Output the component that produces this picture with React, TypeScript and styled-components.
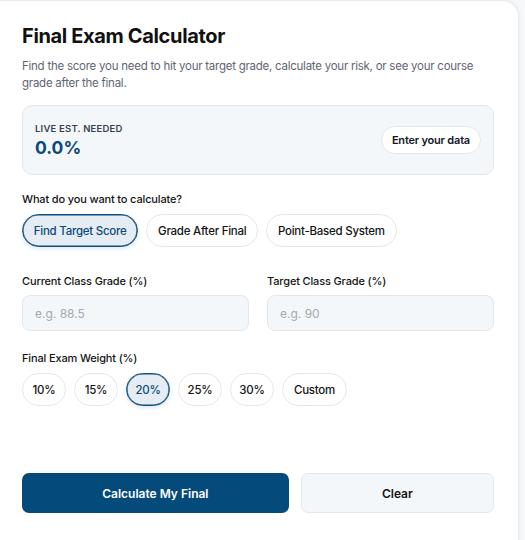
import React, { useState } from 'react';
import styled, { createGlobalStyle, css } from 'styled-components';

const GlobalStyle = createGlobalStyle`
  * { box-sizing: border-box; }
  body {
    margin: 0;
    background: #f6f8fa;
    font-family: Inter, "Noto Sans", sans-serif;
    color: #111827;
  }
`;

const Card = styled.div`
  width: 519px;
  min-height: 560px;
  background: #fff;
  border: 1px solid #e6e9ee;
  border-left: none;
  border-radius: 0 16px 0 0;
  padding: 23px 24px 0 22px;
  box-shadow: 1px 0 3px rgba(15, 23, 42, 0.04);
`;

const Title = styled.h1`
  margin: 0;
  font-size: 20px;
  line-height: 24px;
  font-weight: 700;
  letter-spacing: -0.35px;
  color: #111111;
`;

const Lead = styled.p`
  margin: 10px 0 0;
  font-size: 11.5px;
  line-height: 17px;
  letter-spacing: -0.25px;
  color: #5f6673;
`;

const LiveBox = styled.div`
  margin-top: 13px;
  height: 70px;
  background: #f4f7fa;
  border: 1px solid #e2e7ee;
  border-radius: 10px;
  padding: 0 12px 0 12px;
  display: flex;
  align-items: center;
  justify-content: space-between;
`;

const LiveText = styled.div`
  display: flex;
  flex-direction: column;
  gap: 3px;
`;

const Eyebrow = styled.span`
  font-size: 9.5px;
  font-weight: 600;
  letter-spacing: 0.2px;
  color: #3a4150;
`;

const BigNumber = styled.span`
  font-size: 17.5px;
  font-weight: 700;
  color: #0b4a78;
`;

const GhostPill = styled.button`
  height: 28px;
  padding: 0 10px;
  border-radius: 999px;
  border: 1px solid #e3e7ec;
  background: #fff;
  font: 600 11px Inter, sans-serif;
  letter-spacing: -0.2px;
  color: #111827;
`;

const SectionLabel = styled.div<{ $top: number }>`
  margin-top: ${(p) => p.$top}px;
  font-size: 11px;
  font-weight: 500;
  letter-spacing: -0.15px;
  color: #141414;
`;

const PillRow = styled.div`
  margin-top: 8px;
  display: flex;
  gap: 8px;
`;

const Pill = styled.button<{ $active?: boolean }>`
  height: 33px;
  padding: 0 10.75px;
  border-radius: 999px;
  border: 1px solid #e3e7ec;
  background: #fff;
  font: 500 11.5px Inter, sans-serif;
  letter-spacing: -0.25px;
  color: #141414;
  ${(p) =>
    p.$active &&
    css`
      background: #e5ecf3;
      border-color: #114e7c;
      color: #0b4a78;
      box-shadow: inset 0 0 0 0.6px #114e7c, 0 2px 4px rgba(11, 74, 120, 0.12);
    `}
`;

const WeightPill = styled(Pill)<{ $wide?: boolean }>`
  min-width: 44px;
  padding: 0 ${(p) => (p.$wide ? 11 : 8)}px;
`;

const FieldGrid = styled.div`
  margin-top: 27px;
  display: grid;
  grid-template-columns: 1fr 1fr;
  gap: 18px;
`;

const Field = styled.label`
  display: flex;
  flex-direction: column;
  gap: 7px;
  font-size: 11px;
  font-weight: 500;
  letter-spacing: -0.15px;
  color: #141414;
`;

const Input = styled.input`
  height: 36px;
  width: 100%;
  border-radius: 8px;
  border: 1px solid #e2e7ee;
  background: #f4f7fa;
  padding: 0 12px;
  font: 400 12px Inter, sans-serif;
  color: #111;
  &::placeholder {
    color: #a3a9b3;
  }
`;

const Actions = styled.div`
  margin-top: 67px;
  display: grid;
  grid-template-columns: 1.38fr 1fr;
  gap: 12px;
`;

const Primary = styled.button`
  height: 40px;
  border-radius: 7px;
  border: none;
  background: #044a7a;
  color: #fff;
  font: 600 12px Inter, sans-serif;
`;

const Secondary = styled.button`
  height: 40px;
  border-radius: 7px;
  border: 1px solid #e2e7ee;
  background: #f4f7fa;
  color: #141414;
  font: 600 12px Inter, sans-serif;
`;

const modes = ['Find Target Score', 'Grade After Final', 'Point-Based System'];
const weights = ['10%', '15%', '20%', '25%', '30%', 'Custom'];

export default function App() {
  const [mode, setMode] = useState(modes[0]);
  const [weight, setWeight] = useState('20%');

  return (
    <>
      <GlobalStyle />
      <Card>
        <Title>Final Exam Calculator</Title>
        <Lead>
          Find the score you need to hit your target grade, calculate your risk, or see your course
          grade after the final.
        </Lead>

        <LiveBox>
          <LiveText>
            <Eyebrow>LIVE EST. NEEDED</Eyebrow>
            <BigNumber>0.0%</BigNumber>
          </LiveText>
          <GhostPill>Enter your data</GhostPill>
        </LiveBox>

        <SectionLabel $top={17}>What do you want to calculate?</SectionLabel>
        <PillRow>
          {modes.map((m) => (
            <Pill key={m} $active={m === mode} onClick={() => setMode(m)}>
              {m}
            </Pill>
          ))}
        </PillRow>

        <FieldGrid>
          <Field>
            Current Class Grade (%)
            <Input placeholder="e.g. 88.5" />
          </Field>
          <Field>
            Target Class Grade (%)
            <Input placeholder="e.g. 90" />
          </Field>
        </FieldGrid>

        <SectionLabel $top={20}>Final Exam Weight (%)</SectionLabel>
        <PillRow>
          {weights.map((w) => (
            <WeightPill
              key={w}
              $active={w === weight}
              $wide={w === 'Custom'}
              onClick={() => setWeight(w)}
            >
              {w}
            </WeightPill>
          ))}
        </PillRow>

        <Actions>
          <Primary>Calculate My Final</Primary>
          <Secondary>Clear</Secondary>
        </Actions>
      </Card>
    </>
  );
}
